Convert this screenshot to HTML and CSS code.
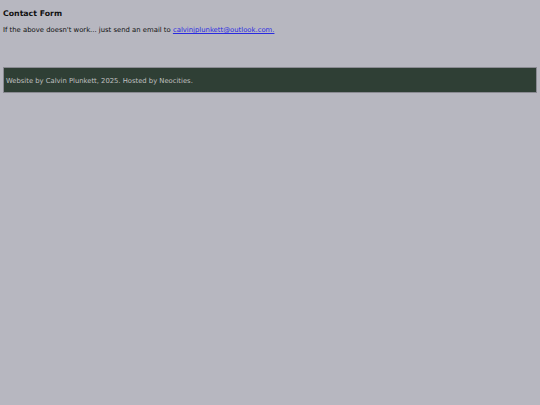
FILE: index.html
```html
<!DOCTYPE html>
<html>
<head>
<meta charset="utf-8">
<link rel="stylesheet" href="styles.css">
</head>
<body>
<main class="content">
<h3 class="title">Contact Form</h3>
<p class="note">If the above doesn't work... just send an email to <a class="mail" href="#">calvinjplunkett@outlook.com.</a></p>
</main>
<footer class="footer">Website by Calvin Plunkett, 2025. Hosted by Neocities.</footer>
</body>
</html>
```
FILE: styles.css
```css
html, body {
  background: #b7b7c0;
}
body {
  margin: 0;
  padding: 3px;
  font-family: "DejaVu Sans", Verdana, sans-serif;
  font-size: 6.8px;
  color: #111;
}
.content {
  height: 64px;
}
.title {
  margin: 0;
  padding-top: 6px;
  font-size: 7.8px;
  font-weight: bold;
}
.note {
  margin: 8px 0 0 0;
  font-size: 6.85px;
}
.mail {
  color: #2a2ae0;
}
.footer {
  box-sizing: border-box;
  height: 26px;
  background: #2f3f35;
  border: 1px solid #8a8a92;
  color: #c0c0c0;
  padding: 1px 2px 0;
  display: flex;
  align-items: center;
}
```
